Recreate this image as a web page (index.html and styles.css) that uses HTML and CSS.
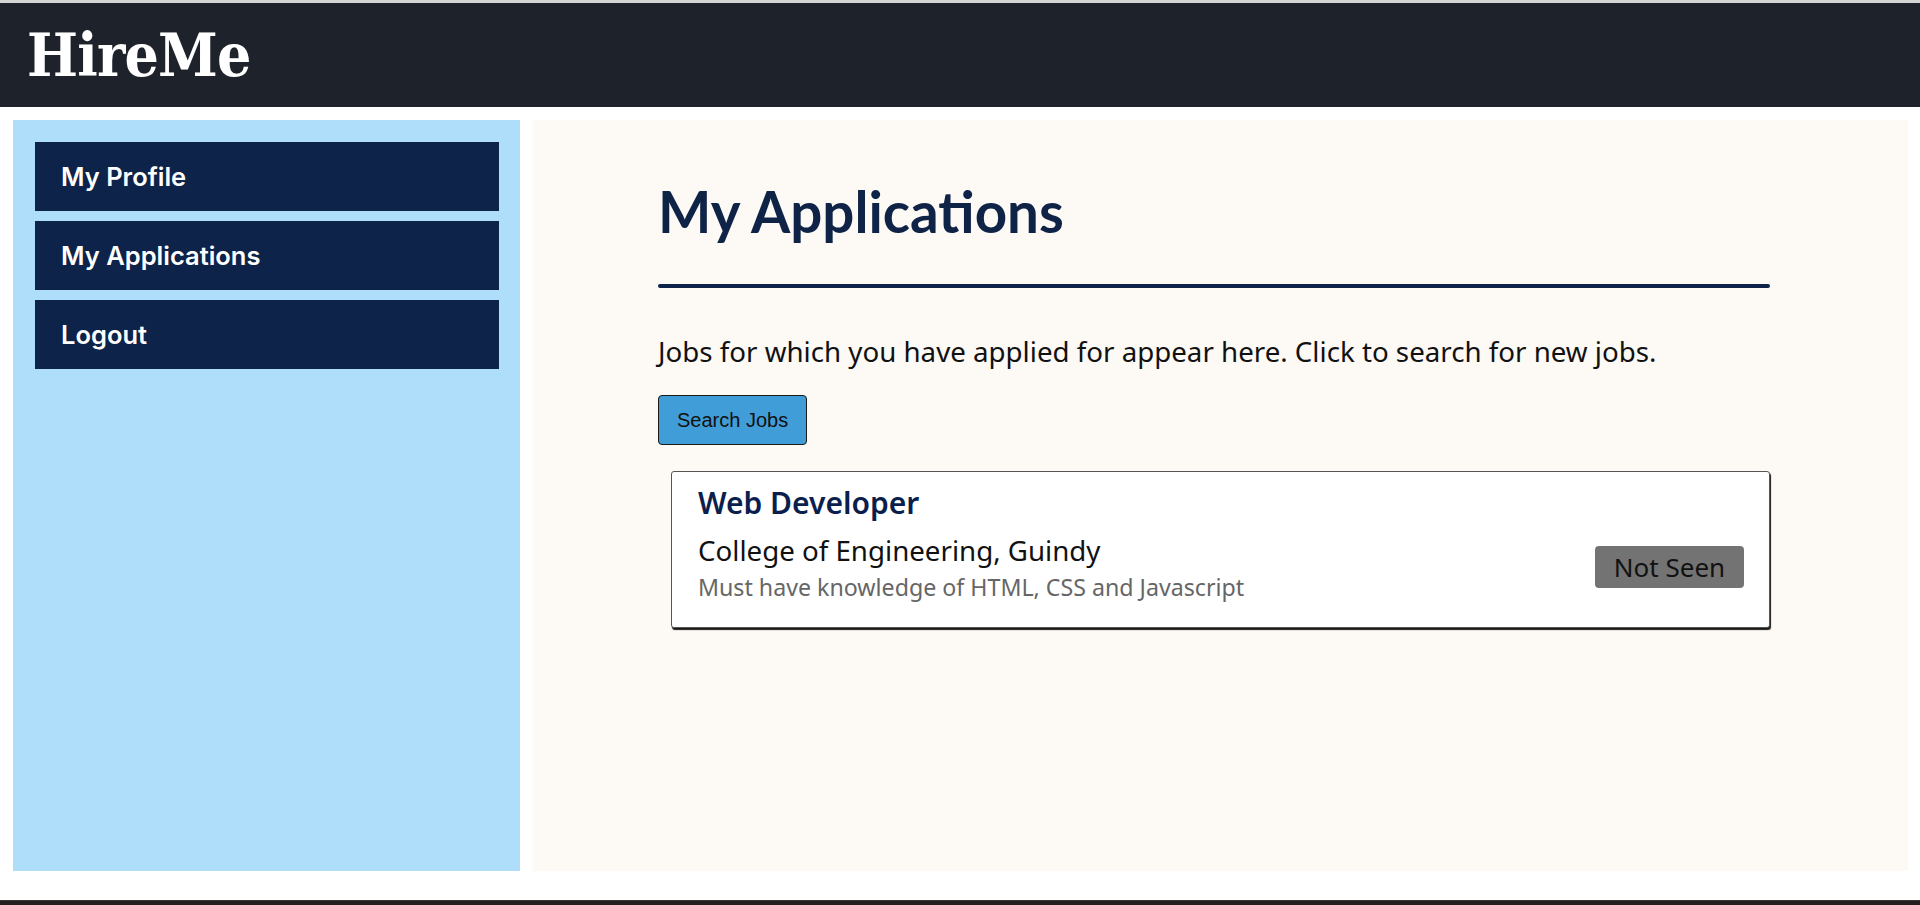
FILE: index.html
```html
<!DOCTYPE html>
<html lang="en">
<head>
<meta charset="utf-8">
<title>HireMe - My Applications</title>
<link rel="stylesheet" href="styles.css">
</head>
<body>
<header class="topbar">
  <h1 class="brand">HireMe</h1>
</header>
<div class="layout">
  <aside class="sidebar">
    <nav class="nav">
      <a class="nav-item" href="#">My Profile</a>
      <a class="nav-item" href="#">My Applications</a>
      <a class="nav-item" href="#">Logout</a>
    </nav>
  </aside>
  <main class="main">
    <h2 class="page-title">My Applications</h2>
    <div class="divider"></div>
    <p class="intro">Jobs for which you have applied for appear here. Click to search for new jobs.</p>
    <button class="search-btn" type="button">Search Jobs</button>
    <div class="job-card">
      <div class="job-title">Web Developer</div>
      <div class="job-row">
        <div class="job-info">
          <div class="job-company">College of Engineering, Guindy</div>
          <div class="job-desc">Must have knowledge of HTML, CSS and Javascript</div>
        </div>
        <span class="status">Not Seen</span>
      </div>
    </div>
  </main>
</div>
<footer class="footer"></footer>
</body>
</html>
```
FILE: styles.css
```css
* { box-sizing: border-box; }
html, body { margin: 0; padding: 0; }
body {
  background: #ffffff;
  font-family: "Noto Sans", "Open Sans", sans-serif;
  overflow: hidden;
}
.topbar {
  border-top: 3px solid #d5d5d5;
  background: #1e232b;
  height: 107px;
  display: flex;
  align-items: center;
  padding-left: 27px;
}
.brand {
  margin: 0;
  color: #ffffff;
  font-family: "DejaVu Serif Condensed", "DejaVu Serif", serif;
  font-weight: 700;
  font-size: 60px;
  line-height: 1;
  letter-spacing: -0.8px;
}
.layout {
  display: flex;
  gap: 13px;
  padding: 13px 12px 0 13px;
  height: 764px;
}
.sidebar {
  width: 507px;
  flex: none;
  background: #aedefa;
  padding: 22px 21px 22px 22px;
}
.nav {
  display: flex;
  flex-direction: column;
  gap: 10px;
}
.nav-item {
  display: flex;
  align-items: center;
  height: 69px;
  padding-left: 26px;
  background: #0d2349;
  color: #ffffff;
  text-decoration: none;
  font-family: "Inter", "Noto Sans", sans-serif;
  font-weight: 600;
  font-size: 25.5px;
}
.main {
  flex: 1;
  background: #fdf9f5;
  padding: 58px 138px 0 125px;
}
.page-title {
  margin: 0;
  font-family: "Lato", sans-serif;
  font-weight: 700;
  font-size: 56.5px;
  line-height: 1.2;
  color: #0f2347;
}
.divider {
  margin-top: 38px;
  height: 4px;
  border-radius: 2px;
  background: #0d2349;
}
.intro {
  margin: 44px 0 0;
  font-size: 27.7px;
  color: #111111;
}
.search-btn {
  display: block;
  margin-top: 25px;
  padding: 12px 18px;
  font-family: "Liberation Sans", Arial, sans-serif;
  font-size: 20px;
  line-height: 24px;
  color: #111111;
  background: #419dd7;
  border: 1px solid #1a1a1a;
  border-radius: 4px;
}
.job-card {
  margin: 26px 0 0 13px;
  background: #ffffff;
  border: 1px solid #555555;
  border-radius: 3px;
  box-shadow: 1px 2px 1px rgba(0, 0, 0, 0.9);
  padding: 10px 25px 24px 26px;
}
.job-title {
  font-size: 30px;
  font-weight: 600;
  color: #0b1f4e;
}
.job-row {
  display: flex;
  align-items: center;
  justify-content: space-between;
  margin-top: 8px;
}
.job-company {
  font-size: 27.7px;
  color: #111111;
}
.job-desc {
  margin-top: 2px;
  font-size: 23.2px;
  color: #666666;
}
.status {
  width: 149px;
  height: 42px;
  display: flex;
  align-items: center;
  justify-content: center;
  background: #737373;
  border-radius: 4px;
  font-size: 26px;
  color: #111111;
}
.footer {
  margin-top: 29px;
  height: 20px;
  background: #241e1e;
  border-top: 1px solid #3a3333;
}
```
